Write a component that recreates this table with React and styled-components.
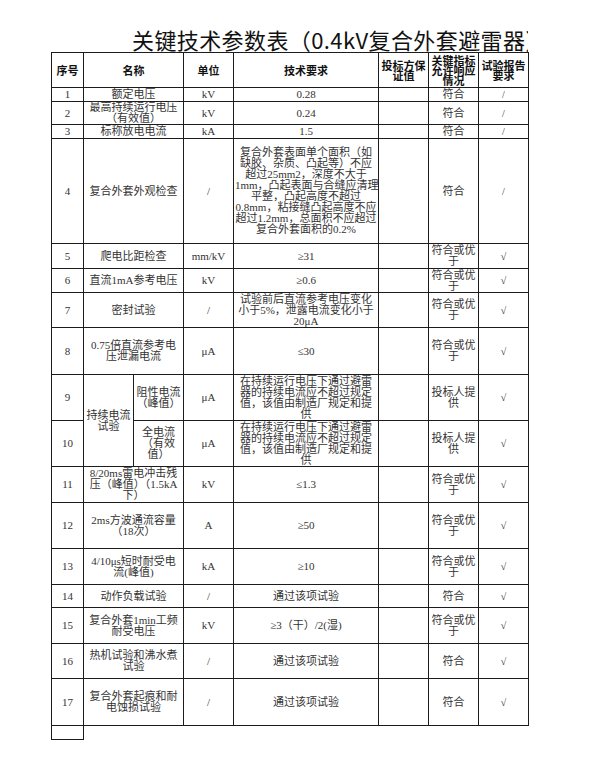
import React from "react";
import { styled, createGlobalStyle } from "styled-components";

const GlobalStyle = createGlobalStyle`
  html, body {
    margin: 0;
    padding: 0;
    background: #fff;
  }
  body {
    font-family: "Liberation Serif", "Noto Sans CJK SC", serif;
  }
`;

const widths = [32, 50, 50, 50, 145, 50, 50, 50];

const req4 = [
  "复合外套表面单个面积（如",
  "缺胶、杂质、凸起等）不应",
  "超过25mm2，深度不大于",
  "1mm，凸起表面与合缝应清理",
  "平整，凸起高度不超过",
  "0.8mm，粘接缝凸起高度不应",
  "超过1.2mm，总面积不应超过",
  "复合外套面积的0.2%",
];

const reqLeak = [
  "在持续运行电压下通过避雷",
  "器的持续电流应不超过规定",
  "值，该值由制造厂规定和提",
  "供",
];

const better = ["符合或优", "于"];
const bidder = ["投标人提", "供"];

const rows = [
  { no: "1", name: ["额定电压"], unit: "kV", req: ["0.28"], resp: ["符合"], rep: "/", h: 14 },
  { no: "2", name: ["最高持续运行电压", "（有效值）"], unit: "kV", req: ["0.24"], resp: ["符合"], rep: "/", h: 23 },
  { no: "3", name: ["标称放电电流"], unit: "kA", req: ["1.5"], resp: ["符合"], rep: "/", h: 14 },
  { no: "4", name: ["复合外套外观检查"], unit: "/", req: req4, resp: ["符合"], rep: "/", h: 105 },
  { no: "5", name: ["爬电比距检查"], unit: "mm/kV", req: ["≥31"], resp: better, rep: "√", h: 25 },
  { no: "6", name: ["直流1mA参考电压"], unit: "kV", req: ["≥0.6"], resp: better, rep: "√", h: 24 },
  {
    no: "7",
    name: ["密封试验"],
    unit: "/",
    req: ["试验前后直流参考电压变化", "小于5%，泄露电流变化小于", "20μA"],
    resp: better,
    rep: "√",
    h: 35,
  },
  { no: "8", name: ["0.75倍直流参考电", "压泄漏电流"], unit: "μA", req: ["≤30"], resp: better, rep: "√", h: 47 },
  { no: "9", group: ["持续电流", "试验"], sub: ["阻性电流", "（峰值）"], unit: "μA", req: reqLeak, resp: bidder, rep: "√", h: 46 },
  { no: "10", sub: ["全电流", "（有效", "值）"], unit: "μA", req: reqLeak, resp: bidder, rep: "√", h: 46 },
  { no: "11", name: ["8/20ms雷电冲击残", "压（峰值）（1.5kA", "下）"], unit: "kV", req: ["≤1.3"], resp: better, rep: "√", h: 36 },
  { no: "12", name: ["2ms方波通流容量", "（18次）"], unit: "A", req: ["≥50"], resp: better, rep: "√", h: 46 },
  { no: "13", name: ["4/10μs短时耐受电", "流(峰值)"], unit: "kA", req: ["≥10"], resp: better, rep: "√", h: 36 },
  { no: "14", name: ["动作负载试验"], unit: "/", req: ["通过该项试验"], resp: ["符合"], rep: "√", h: 23 },
  { no: "15", name: ["复合外套1min工频", "耐受电压"], unit: "kV", req: ["≥3（干）/2(湿)"], resp: better, rep: "√", h: 36 },
  { no: "16", name: ["热机试验和沸水煮", "试验"], unit: "/", req: ["通过该项试验"], resp: ["符合"], rep: "√", h: 35 },
  { no: "17", name: ["复合外套起痕和耐", "电蚀损试验"], unit: "/", req: ["通过该项试验"], resp: ["符合"], rep: "√", h: 47 },
];

// each line is its own fixed-height block so mixed fonts don't grow the row
const Lines = ({ lines, h = 11 }) =>
  lines.map((l, i) => (
    <Line key={i} $h={h}>
      {l}
    </Line>
  ));

const App = () => {
  return (
    <Page>
      <GlobalStyle />
      <Title>关键技术参数表（0.4kV复合外套避雷器）</Title>
      <Table>
        <colgroup>
          {widths.map((w, i) => (
            <col key={i} style={{ width: w }} />
          ))}
        </colgroup>
        <thead>
          <Row $h={35}>
            <Head>序号</Head>
            <Head colSpan={2}>名称</Head>
            <Head>单位</Head>
            <Head>技术要求</Head>
            <Head>
              <Lines lines={["投标方保", "证值"]} h={10} />
            </Head>
            <Head>
              <Lines lines={["关键指标", "允许响应", "情况"]} h={10} />
            </Head>
            <Head>
              <Lines lines={["试验报告", "要求"]} h={10} />
            </Head>
          </Row>
        </thead>
        <tbody>
          {rows.map((r) => (
            <Row key={r.no} $h={r.h}>
              <Cell>{r.no}</Cell>
              {r.name ? (
                <Cell colSpan={2}>
                  <Lines lines={r.name} />
                </Cell>
              ) : (
                <>
                  {r.group && (
                    <Cell rowSpan={2}>
                      <Lines lines={r.group} />
                    </Cell>
                  )}
                  <Cell>
                    <Lines lines={r.sub} />
                  </Cell>
                </>
              )}
              <Cell>{r.unit}</Cell>
              <Cell>
                <Lines lines={r.req} />
              </Cell>
              <Cell />
              <Cell>
                <Lines lines={r.resp} />
              </Cell>
              <Cell $small>{r.rep}</Cell>
            </Row>
          ))}
          <Row $h={14}>
            <Cell />
          </Row>
        </tbody>
      </Table>
    </Page>
  );
};

const Page = styled.div`
  padding-top: 26px;
  width: 600px;
`;

const Title = styled.div`
  margin-left: 51px;
  width: 477px;
  box-sizing: border-box;
  padding-left: 81px;
  height: 26px;
  line-height: 26px;
  overflow: hidden;
  white-space: nowrap;
  font-family: "Noto Sans CJK SC", sans-serif;
  font-size: 22px;
  letter-spacing: 0.4px;
  color: #111;
`;

const Table = styled.table`
  margin-left: 51px;
  width: 477px;
  table-layout: fixed;
  border-collapse: collapse;
`;

const Row = styled.tr`
  height: ${(p) => p.$h}px;
`;

const Line = styled.div`
  height: ${(p) => p.$h}px;
  line-height: ${(p) => p.$h}px;
  white-space: nowrap;
`;

const Head = styled.th`
  border: 1px solid #1c1c1c;
  padding: 0;
  font-family: "Noto Sans CJK SC", sans-serif;
  font-weight: 700;
  font-size: 11px;
  line-height: 11px;
  color: #111;
  text-align: center;
  vertical-align: middle;
  white-space: nowrap;
`;

const Cell = styled.td`
  border: 1px solid #1c1c1c;
  padding: 0 1px;
  font-size: ${(p) => (p.$small ? 10 : 11)}px;
  line-height: 11px;
  color: #333;
  text-align: center;
  vertical-align: middle;
  white-space: nowrap;
`;

export default App;
